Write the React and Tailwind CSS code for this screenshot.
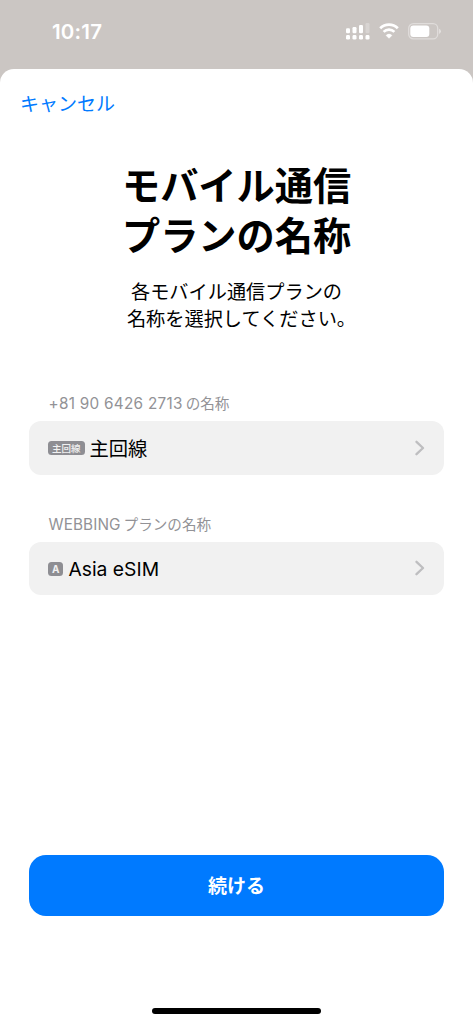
// App.jsx
import React from "react";

const plans = [
  {
    id: "primary",
    number: "+81 90 6426 2713",
    suffix: "の名称",
    badge: "主回線",
    label: "主回線",
  },
  {
    id: "travel",
    number: "WEBBING",
    suffix: "プランの名称",
    badge: "A",
    label: "Asia eSIM",
  },
];

const SignalIcon = () => (
  <svg width="25" height="17" viewBox="0 0 25 17" fill="white">
    <rect x="0" y="5.2" width="4" height="5" rx="1.2" />
    <rect x="6.5" y="4" width="4" height="6.2" rx="1.2" />
    <rect x="13" y="2" width="4" height="8.2" rx="1.2" />
    <rect x="19.5" y="0" width="4" height="10.2" rx="1.2" opacity="0.25" />
    {/* second line */}
    <rect x="0" y="12" width="4" height="4.6" rx="1.4" />
    <rect x="6.5" y="12" width="4" height="4.6" rx="1.4" />
    <rect x="13" y="12" width="4" height="4.6" rx="1.4" />
    <rect x="19.5" y="12" width="4" height="4.6" rx="1.4" />
  </svg>
);

const WifiIcon = () => (
  <svg width="20" height="16" viewBox="0 0 20 16" fill="none">
    <path d="M1.2 5.3a12.6 12.6 0 0 1 17.6 0" stroke="white" strokeWidth="2.8" />
    <path d="M4.6 8.9a7.7 7.7 0 0 1 10.8 0" stroke="white" strokeWidth="2.7" />
    <path
      d="M10 15.3 7.1 12.4q2.9-2.6 5.8 0Z"
      fill="white"
      stroke="white"
      strokeWidth="0.6"
      strokeLinejoin="round"
    />
  </svg>
);

const BatteryIcon = () => (
  <svg width="33" height="17" viewBox="0 0 33 17">
    <rect
      x="0.7"
      y="0.7"
      width="29"
      height="15.2"
      rx="4.6"
      fill="none"
      stroke="white"
      strokeOpacity="0.4"
      strokeWidth="1.3"
    />
    <rect x="2.3" y="2.5" width="19" height="11.6" rx="3" fill="white" />
    <path d="M31.1 5.7q1.8.8 1.8 2.6t-1.8 2.6Z" fill="white" opacity="0.5" />
  </svg>
);

const ChevronIcon = () => (
  <svg width="10" height="16" viewBox="0 0 10 16" fill="none">
    <path
      d="M1.5 1.8 8 8l-6.5 6.2"
      stroke="#bebec0"
      strokeWidth="2.3"
      strokeLinecap="round"
      strokeLinejoin="round"
    />
  </svg>
);

const StatusBar = () => (
  <div className="flex h-[69px] items-start justify-between pl-[52px] pr-8 text-white">
    <span className="mt-[18px] text-[20.5px] leading-7 font-semibold tracking-[0.2px]">
      10:17
    </span>
    <div className="mt-[23px] flex items-start">
      <SignalIcon />
      <div className="ml-2">
        <WifiIcon />
      </div>
      <div className="ml-[9px]">
        <BatteryIcon />
      </div>
    </div>
  </div>
);

const PlanField = ({ plan }) => (
  <div className="flex flex-col gap-[7px]">
    <p className="flex items-center gap-[3px] pl-[19.5px] text-[15.3px] leading-5 text-[#929296]">
      <span className={plan.id === "primary" ? "tracking-[0.28px]" : "tracking-[0.1px]"}>
        {plan.number}
      </span>
      <span className="text-[14.6px]">{plan.suffix}</span>
    </p>
    <button className="flex h-[53.5px] w-full items-center rounded-xl bg-[#f1f1f1] pl-[19px] pr-[19px] text-left">
      <span className="mt-px flex h-[14px] items-center rounded-[3.5px] bg-[#8e8e93] px-1 text-[9.5px] leading-none font-medium text-[#f1f1f1]">
        <span className={plan.id === "primary" ? "pt-px" : "pt-px text-[10px] font-bold"}>
          {plan.badge}
        </span>
      </span>
      <span className="ml-[5px] flex-1 pt-[1.5px] text-[19.3px] leading-7 text-black">
        {plan.label}
      </span>
      <ChevronIcon />
    </button>
  </div>
);

const App = () => {
  return (
    <div className="flex h-[1024px] w-full flex-col overflow-hidden bg-[#cbc6c3] font-[Inter,'Noto_Sans_CJK_JP',sans-serif]">
      <StatusBar />

      <main className="flex flex-1 flex-col rounded-t-[14px] bg-white">
        <button className="ml-5 mt-[22px] self-start text-[19px] leading-7 text-[#007aff]">
          キャンセル
        </button>

        <header className="mt-[42px] text-center text-black">
          <h1 className="text-[38.2px] leading-[50px] font-bold">
            モバイル通信
            <br />
            プランの名称
          </h1>
          <p className="mt-[18px] text-[19.2px] leading-[27px]">
            各モバイル通信プランの
            <br />
            {/* offsets the blank half of the closing 。 */}
            <span className="pl-[10px]">名称を選択してください。</span>
          </p>
        </header>

        {/* Plan labels */}
        <div className="mx-[29px] mt-[61px] flex flex-col gap-10">
          {plans.map((plan) => (
            <PlanField key={plan.id} plan={plan} />
          ))}
        </div>

        <button className="mx-[29px] mt-auto h-[61px] rounded-[17px] bg-[#007aff] pt-[3px] text-[19px] font-bold text-white">
          続ける
        </button>

        {/* Home indicator */}
        <div className="mx-auto mt-[92px] mb-[10px] h-[6px] w-[169px] rounded-full bg-black" />
      </main>
    </div>
  );
};

export default App;
